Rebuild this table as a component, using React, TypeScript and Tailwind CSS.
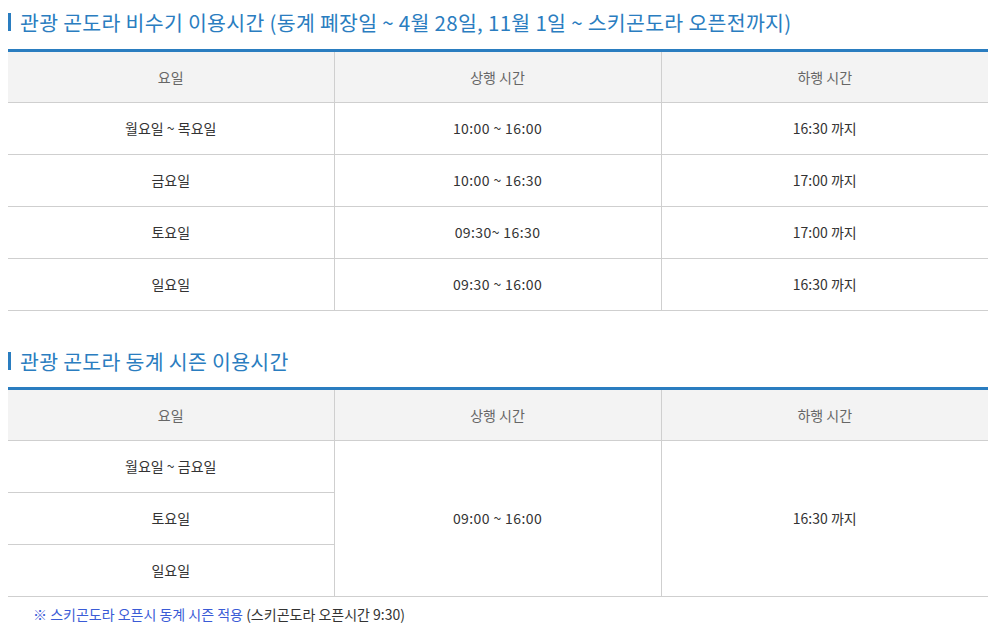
import React from "react";

const OFF_SEASON = [
  { day: "월요일 ~ 목요일", up: "10:00 ~ 16:00", down: "16:30 까지" },
  { day: "금요일", up: "10:00 ~ 16:30", down: "17:00 까지" },
  { day: "토요일", up: "09:30~ 16:30", down: "17:00 까지" },
  { day: "일요일", up: "09:30 ~ 16:00", down: "16:30 까지" },
];

const WINTER_DAYS = ["월요일 ~ 금요일", "토요일", "일요일"];

const font = { fontFamily: '"Noto Sans CJK KR", "Noto Sans", sans-serif' };

function Title({ children }: { children: React.ReactNode }) {
  return (
    <h3 className="flex items-center h-[24px] text-[20.5px] leading-none text-[#2a7dc0] tracking-[0.3px]">
      <span className="w-[3px] h-[18px] bg-[#2a7dc0] mr-[9px]" />
      {children}
    </h3>
  );
}

function Head() {
  return (
    <thead>
      <tr className="h-[52px] bg-[#f3f3f3] text-[#666]">
        <th className="font-normal border-r border-b border-[#cfcfcf] w-[326px]">요일</th>
        <th className="font-normal border-r border-b border-[#cfcfcf] w-[327px]">상행 시간</th>
        <th className="font-normal border-b border-[#cfcfcf]">하행 시간</th>
      </tr>
    </thead>
  );
}

export default function App() {
  return (
    <div className="bg-white w-[996px] h-[636px] px-[8px] pt-[10px] text-[14px] text-[#333]" style={font}>
      <Title>관광 곤도라 비수기 이용시간 (동계 폐장일 ~ 4월 28일, 11월 1일 ~ 스키곤도라 오픈전까지)</Title>
      <table className="mt-[15px] w-[980px] border-collapse border-t-[3px] border-t-[#2a7dc0] text-center">
        <Head />
        <tbody>
          {OFF_SEASON.map((r) => (
            <tr key={r.day} className="h-[52px]">
              <td className="border-r border-b border-[#cfcfcf]">{r.day}</td>
              <td className="border-r border-b border-[#cfcfcf] tracking-[0.4px]">{r.up}</td>
              <td className="border-b border-[#cfcfcf]">{r.down}</td>
            </tr>
          ))}
        </tbody>
      </table>

      <div className="mt-[38px]">
        <Title>관광 곤도라 동계 시즌 이용시간</Title>
      </div>
      <table className="mt-[14px] w-[980px] border-collapse border-t-[3px] border-t-[#2a7dc0] text-center">
        <Head />
        <tbody>
          {WINTER_DAYS.map((d, i) => (
            <tr key={d} className="h-[52px]">
              <td className="border-r border-b border-[#cfcfcf]">{d}</td>
              {i === 0 && (
                <>
                  <td rowSpan={3} className="border-r border-b border-[#cfcfcf] tracking-[0.4px]">09:00 ~ 16:00</td>
                  <td rowSpan={3} className="border-b border-[#cfcfcf]">16:30 까지</td>
                </>
              )}
            </tr>
          ))}
        </tbody>
      </table>
      <p className="mt-[7px] pl-[25px] text-[14px]">
        <span className="text-[#3a5bd6]">※ 스키곤도라 오픈시 동계 시즌 적용</span>{" "}
        <span className="text-[#333]">(스키곤도라 오픈시간 9:30)</span>
      </p>
    </div>
  );
}
